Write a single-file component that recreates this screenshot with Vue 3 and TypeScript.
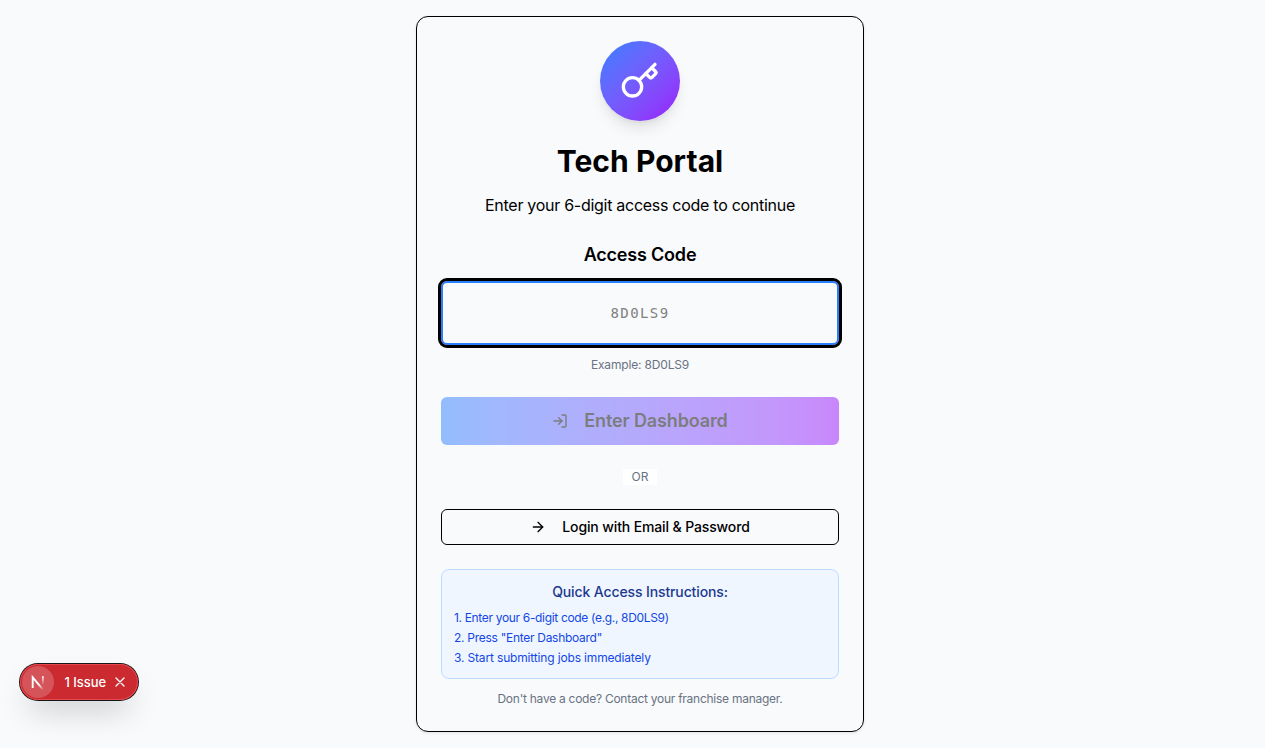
<script setup lang="ts">
import { ref } from 'vue'

interface Step {
  text: string
  fit: string
}

const code = ref<string>('')
const issueVisible = ref<boolean>(true)
const steps: Step[] = [
  { text: '1. Enter your 6-digit code (e.g., 8D0LS9)', fit: 'tight' },
  { text: '2. Press "Enter Dashboard"', fit: 'snug' },
  { text: '3. Start submitting jobs immediately', fit: 'normal' },
]
</script>

<template>
  <div class="page">
    <main class="card">
      <div class="logo">
        <svg width="40" height="40" viewBox="0 0 24 24" fill="none" stroke="currentColor" stroke-width="2" stroke-linecap="round" stroke-linejoin="round">
          <path d="m15.5 7.5 2.3 2.3a1 1 0 0 0 1.4 0l2.1-2.1a1 1 0 0 0 0-1.4L19 4" />
          <path d="m21 2-9.6 9.6" />
          <circle cx="7.5" cy="15.5" r="5.5" />
        </svg>
      </div>
      <h1 class="title">Tech Portal</h1>
      <p class="subtitle">Enter your 6-digit access code to continue</p>

      <form class="form" @submit.prevent>
        <label class="label" for="code">Access Code</label>
        <input id="code" v-model="code" class="input" type="text" maxlength="6" placeholder="8D0LS9" autocomplete="off" />
        <p class="example">Example: 8D0LS9</p>
        <button class="enter" type="submit" disabled>
          <svg width="16" height="16" viewBox="0 0 24 24" fill="none" stroke="currentColor" stroke-width="2" stroke-linecap="round" stroke-linejoin="round">
            <path d="m10 17 5-5-5-5" />
            <path d="M15 12H3" />
            <path d="M15 3h4a2 2 0 0 1 2 2v14a2 2 0 0 1-2 2h-4" />
          </svg>
          <span class="enter-text">Enter Dashboard</span>
        </button>
      </form>

      <div class="divider"><span class="or">OR</span></div>

      <button class="login" type="button">
        <svg width="16" height="16" viewBox="0 0 24 24" fill="none" stroke="currentColor" stroke-width="2" stroke-linecap="round" stroke-linejoin="round">
          <path d="M5 12h14" />
          <path d="m12 5 7 7-7 7" />
        </svg>
        <span class="login-text">Login with Email &amp; Password</span>
      </button>

      <section class="help">
        <h2 class="help-title">Quick Access Instructions:</h2>
        <ol class="steps">
          <li v-for="step in steps" :key="step.text" :class="step.fit">{{ step.text }}</li>
        </ol>
      </section>

      <p class="footer">Don't have a code? Contact your franchise manager.</p>
    </main>

    <div v-if="issueVisible" class="badge">
      <span class="mark">
        <svg width="32" height="32" viewBox="0 0 32 32" fill="none">
          <defs>
            <linearGradient id="diag" x1="11" y1="11" x2="21" y2="23" gradientUnits="userSpaceOnUse">
              <stop offset="0.6" stop-color="#fff" />
              <stop offset="1" stop-color="#fff" stop-opacity="0.1" />
            </linearGradient>
            <linearGradient id="stem" x1="20" y1="10" x2="20" y2="19" gradientUnits="userSpaceOnUse">
              <stop offset="0" stop-color="#fff" />
              <stop offset="1" stop-color="#fff" stop-opacity="0" />
            </linearGradient>
          </defs>
          <path d="M10.7 22V11.3L21 23.6" stroke="url(#diag)" stroke-width="1.9" />
          <path d="M20.9 10.2V18.8" stroke="url(#stem)" stroke-width="1.7" />
        </svg>
      </span>
      <span class="badge-text">1 Issue</span>
      <button class="close" type="button" aria-label="Close" @click="issueVisible = false">
        <svg width="10" height="10" viewBox="0 0 10 10" fill="none" stroke="#fff" stroke-width="1.3" stroke-linecap="round">
          <path d="M1 1l8 8M9 1L1 9" />
        </svg>
      </button>
    </div>
  </div>
</template>

<style>
html,
body {
  overflow: hidden;
  background: #f8fafc;
}
</style>

<style scoped>
* {
  box-sizing: border-box;
  margin: 0;
  padding: 0;
}
.page {
  width: 1280px;
  height: 748px;
  display: flex;
  align-items: center;
  justify-content: center;
  color: #000;
  font-family: Inter, "Liberation Sans", sans-serif;
}
.card {
  width: 448px;
  height: 716px;
  padding: 24px;
  border: 1px solid #000;
  border-radius: 12px;
  box-shadow: 0 1px 3px rgba(0, 0, 0, 0.1);
  display: flex;
  flex-direction: column;
  align-items: stretch;
  text-align: center;
  white-space: nowrap;
}
.logo {
  width: 80px;
  height: 80px;
  flex: none;
  align-self: center;
  display: grid;
  place-items: center;
  color: #fff;
  border-radius: 50%;
  background: linear-gradient(135deg in oklab, #2b7fff, #9810fa);
  box-shadow: 0 10px 15px -3px rgba(0, 0, 0, 0.1), 0 4px 6px -4px rgba(0, 0, 0, 0.1);
}
.title {
  margin-top: 22px;
  font-size: 30px;
  line-height: 36px;
  font-weight: 700;
  letter-spacing: 0.05px;
}
.subtitle {
  margin-top: 14px;
  font-size: 16px;
  line-height: 24px;
  letter-spacing: -0.28px;
}
.form {
  margin-top: 24px;
  display: flex;
  flex-direction: column;
}
.label {
  font-size: 18px;
  line-height: 28px;
  font-weight: 600;
  letter-spacing: -0.2px;
}
.input {
  height: 64px;
  margin-top: 12px;
  padding: 4px 12px;
  border: 2px solid #2b7fff;
  border-radius: 6px;
  outline: 3px solid #000;
  background: transparent;
  text-align: center;
  font-family: "DejaVu Sans Mono", monospace;
  font-size: 14px;
  letter-spacing: 1.4px;
}
.input::placeholder {
  color: #808080;
  opacity: 1;
}
.example {
  margin-top: 12px;
  color: #6a7282;
  font-size: 12px;
  line-height: 16px;
  letter-spacing: -0.17px;
}
.enter {
  height: 48px;
  margin-top: 24px;
  display: flex;
  align-items: center;
  justify-content: center;
  gap: 16px;
  border: 0;
  border-radius: 6px;
  background: linear-gradient(90deg in oklab, #2b7fff, #9810fa);
  color: #000;
  opacity: 0.5;
  font-family: inherit;
  font-size: 18px;
  line-height: 28px;
  font-weight: 600;
  letter-spacing: -0.13px;
}
.divider {
  margin-top: 24px;
  display: flex;
  justify-content: center;
}
.or {
  width: 34px;
  background: #fff;
  color: #6a7282;
  font-size: 12px;
  line-height: 16px;
}
.login {
  height: 36px;
  margin-top: 24px;
  display: flex;
  align-items: center;
  justify-content: center;
  gap: 16px;
  border: 1px solid #000;
  border-radius: 6px;
  background: transparent;
  color: #000;
  font-family: inherit;
  font-size: 14px;
  line-height: 20px;
  font-weight: 500;
  letter-spacing: -0.13px;
}
.help {
  height: 110px;
  margin-top: 24px;
  padding: 12px;
  border: 1px solid #bedbff;
  border-radius: 8px;
  background: #eff6ff;
}
.help-title {
  color: #1c398e;
  font-size: 14px;
  line-height: 20px;
  font-weight: 500;
  letter-spacing: -0.12px;
}
.steps {
  margin-top: 8px;
  list-style: none;
  text-align: left;
  color: #1447e6;
  font-size: 12px;
  line-height: 16px;
}
.steps li + li {
  margin-top: 4px;
}
.tight {
  letter-spacing: -0.33px;
}
.snug {
  letter-spacing: -0.28px;
}
.normal {
  letter-spacing: -0.16px;
}
.footer {
  margin-top: 12px;
  color: #6a7282;
  font-size: 12px;
  line-height: 16px;
  letter-spacing: -0.26px;
}
.badge {
  position: absolute;
  left: 20px;
  top: 664px;
  width: 118px;
  height: 36px;
  padding: 1px;
  display: flex;
  align-items: center;
  border-radius: 18px;
  background: #ca2a30;
  color: #fff;
  box-shadow: 0 0 0 1px #171717, inset 0 0 0 1px #e5484d, 0 16px 32px -8px rgba(0, 0, 0, 0.24);
}
.mark {
  width: 32px;
  height: 32px;
  margin-left: 1px;
  display: grid;
  place-items: center;
  border-radius: 50%;
  background: rgba(255, 255, 255, 0.2);
}
.badge-text {
  width: 42px;
  margin-left: 10.5px;
  font-size: 13px;
  line-height: 18px;
  font-weight: 500;
  letter-spacing: -0.05px;
  white-space: nowrap;
}
.close {
  margin-left: 8.5px;
  width: 10px;
  height: 10px;
  display: grid;
  border: 0;
  background: none;
}
</style>
